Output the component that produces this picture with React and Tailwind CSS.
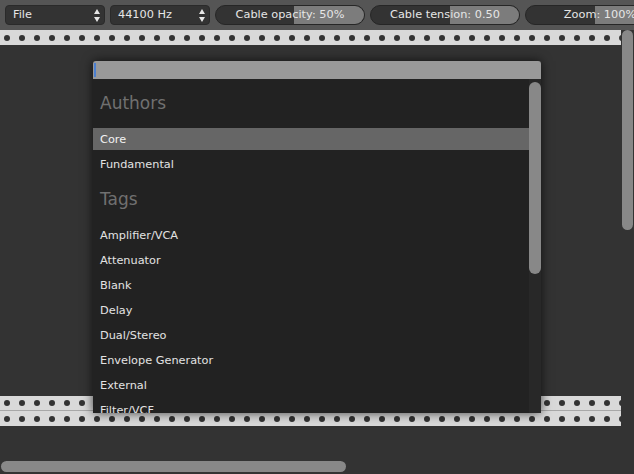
import React from 'react';

const FONT = "font-['DejaVu_Sans',sans-serif]";

function SelectButton({ label }) {
  return (
    <div className="w-[100px] h-[20px] shrink-0 rounded-[4px] bg-[#333] border border-[#2a2a2a] flex items-center justify-between pl-[7px] pr-[4px] text-[11.3px] text-[#e6e6e6]">
      <span>{label}</span>
      {/* up/down arrows */}
      <svg width="6" height="13" viewBox="0 0 6 13">
        <path d="M3 0 L6 5 L0 5 Z" fill="#e6e6e6" />
        <path d="M0 8 L6 8 L3 13 Z" fill="#e6e6e6" />
      </svg>
    </div>
  );
}

function Slider({ label, split }) {
  return (
    <div className="relative shrink-0 w-[150px] h-[20px] rounded-full bg-[#333] border border-[#262626] overflow-hidden flex items-center justify-center text-[11.3px] text-[#e6e6e6]">
      <div className="absolute top-0 bottom-0 right-0 bg-[#7c7c7c]" style={{ left: split }} />
      <span className="relative">{label}</span>
    </div>
  );
}

function Rail({ border }) {
  const dots = Array.from({ length: 42 });
  return (
    <div className={`w-[621px] h-[15px] bg-[#d9d9d9] flex items-center gap-[9px] pl-[4px] overflow-hidden ${border ? 'border-b border-[#a8a8a8]' : ''}`}>
      {dots.map((_, i) => (
        <div key={i} className="w-[6px] h-[6px] shrink-0 rounded-full bg-[#333]" />
      ))}
    </div>
  );
}

const authors = ['Core', 'Fundamental'];
const tags = [
  'Amplifier/VCA',
  'Attenuator',
  'Blank',
  'Delay',
  'Dual/Stereo',
  'Envelope Generator',
  'External',
  'Filter/VCF',
];

function Header({ children }) {
  return (
    <div className="h-[43px] shrink-0 flex items-center pl-[7px] text-[17px] text-[#707070]">
      {children}
    </div>
  );
}

function Item({ children, active }) {
  return (
    <div className={`h-[22px] shrink-0 flex items-center pl-[7px] pt-[2px] text-[11.3px] ${active ? 'bg-[#666] text-[#f2f2f2]' : 'text-[#e2e2e2]'}`}>
      {children}
    </div>
  );
}

export default function App() {
  return (
    <div className={`relative w-[634px] h-[474px] bg-[#333] overflow-hidden ${FONT}`}>
      {/* toolbar */}
      <div className="h-[30px] bg-[#555] flex items-center gap-[5px] pl-[5px] overflow-hidden">
        <SelectButton label="File" />
        <SelectButton label="44100 Hz" />
        <Slider label="Cable opacity: 50%" split="78px" />
        <Slider label="Cable tension: 0.50" split="79px" />
        <Slider label="Zoom: 100%" split="69px" />
      </div>

      {/* rack */}
      <Rail />
      <div className="h-[351px]" />
      <Rail border />
      <Rail />

      {/* rack scrollbars */}
      <div className="absolute left-[622px] top-[30px] w-[11px] h-[200px] rounded-full bg-[#888]" />
      <div className="absolute left-[1px] top-[461px] w-[345px] h-[11px] rounded-full bg-[#888]" />

      {/* module browser */}
      <div className="absolute left-[93px] top-[61px] w-[448px] shadow-[0_0_10px_rgba(0,0,0,0.7)]">
        <div className="h-[18px] bg-[#999] rounded-t-[3px] flex items-center pl-[1px]">
          <div className="w-[2px] h-[14px] bg-[#4b7fd0]" />
        </div>
        <div className="h-[334px] bg-[#222] flex overflow-hidden">
          <div className="flex-1 flex flex-col gap-[3px] pt-[3px]">
            <Header>Authors</Header>
            {authors.map((a, i) => (
              <Item key={a} active={i === 0}>{a}</Item>
            ))}
            <Header>Tags</Header>
            {tags.map((t) => (
              <Item key={t}>{t}</Item>
            ))}
          </div>
          <div className="w-[12px] bg-[#282828] pt-[3px]">
            <div className="h-[192px] rounded-full bg-[#888]" />
          </div>
        </div>
      </div>
    </div>
  );
}
